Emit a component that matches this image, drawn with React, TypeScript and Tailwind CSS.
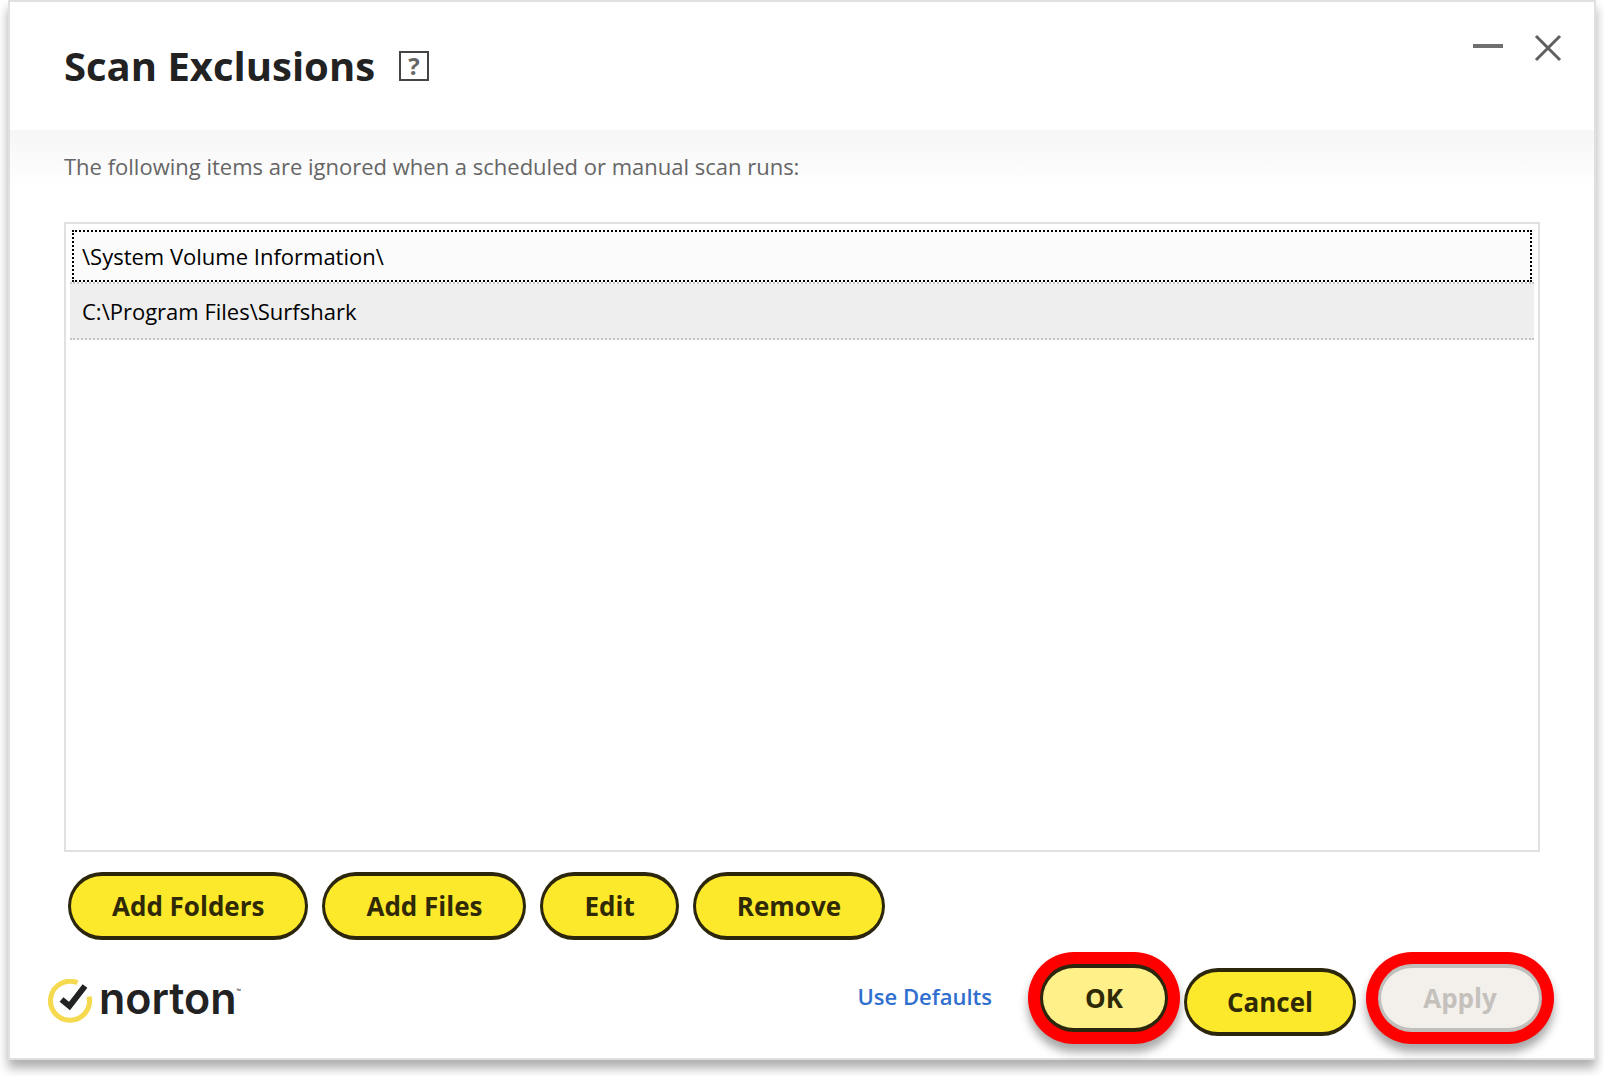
import type { ReactNode } from "react";

const exclusions = ["\\System Volume Information\\", "C:\\Program Files\\Surfshark"];

function PillButton({
  children,
  className = "bg-[#fde92b] px-[41px]",
}: {
  children: ReactNode;
  className?: string;
}) {
  return (
    <button
      type="button"
      className={`h-[68px] rounded-full border-x-3 border-y-4 border-[#2b260c] text-[26px] leading-8 font-bold whitespace-nowrap text-[#2f2a05] ${className}`}
    >
      {children}
    </button>
  );
}

function Highlight({ children }: { children: ReactNode }) {
  return (
    <div className="flex rounded-full bg-[#ff0000] p-3 shadow-[0_8px_10px_rgba(0,0,0,0.35)]">
      {children}
    </div>
  );
}

function NortonLogo() {
  return (
    <div className="flex items-end gap-[7px]">
      <svg className="size-11" viewBox="0 0 44 44" fill="none" aria-hidden="true">
        <path d="M29.5 3.8A19.5 19.5 0 1 0 41 17.5" stroke="#f5d94f" strokeWidth="5" />
        <path d="M13.5 20.5L21.5 27L37 7" stroke="#222222" strokeWidth="6" />
      </svg>
      <div className="flex items-start text-[#222222]">
        <span className="font-['Inter',sans-serif] text-[43px] leading-[50px] font-semibold">norton</span>
        <span className="text-[6px] leading-9">™</span>
      </div>
    </div>
  );
}

export default function App() {
  return (
    <div className="flex min-h-screen bg-white px-2 pb-4 font-['Open_Sans','Noto_Sans',sans-serif]">
      <main className="flex flex-1 flex-col border-2 border-[#e0e0e0] bg-white shadow-[0_8px_10px_rgba(0,0,0,0.32)]">
        <header className="flex h-32 items-start justify-between pr-[30px] pl-[54px]">
          <div className="flex h-32 items-center gap-6">
            <h1 className="text-[40px] leading-12 font-bold text-[#222222]">Scan Exclusions</h1>
            <button
              type="button"
              aria-label="Help"
              className="flex size-[30px] items-center justify-center border-2 border-[#444444] text-2xl leading-6 font-bold text-[#666666]"
            >
              ?
            </button>
          </div>
          <div className="flex items-center gap-7 pt-8">
            <button type="button" aria-label="Minimize">
              <svg className="h-8 w-8" viewBox="0 0 32 32" aria-hidden="true">
                <path d="M1 12H31" stroke="#707070" strokeWidth="4" />
              </svg>
            </button>
            <button type="button" aria-label="Close">
              <svg className="h-8 w-8" viewBox="0 0 32 32" aria-hidden="true">
                <path d="M4 2L28 26M28 2L4 26" stroke="#606060" strokeWidth="3" />
              </svg>
            </button>
          </div>
        </header>

        <section className="flex flex-1 flex-col bg-[linear-gradient(#f6f6f6,#ffffff_60px)] px-[54px] pt-5">
          <p className="text-[22px] leading-8 text-[#666666]">
            The following items are ignored when a scheduled or manual scan runs:
          </p>
          <ul className="mt-10 flex-1 border-2 border-[#e0e0e0] bg-white p-1 text-[22px] text-black">
            {exclusions.map((path, i) =>
              i === 0 ? (
                <li key={path} className="border-b-2 border-dotted border-[#c8c8c8] bg-[#fbfbfb] px-0.5 pt-0.5">
                  <div className="border-2 border-dotted border-black px-2 py-1.5 leading-9">{path}</div>
                </li>
              ) : (
                <li key={path} className="border-b-2 border-dotted border-[#c4c4c4] bg-[#eeeeee] px-3 py-[9px] leading-9">
                  {path}
                </li>
              ),
            )}
          </ul>
          <div className="mt-5 ml-1 flex gap-3.5">
            <PillButton>Add Folders</PillButton>
            <PillButton>Add Files</PillButton>
            <PillButton>Edit</PillButton>
            <PillButton>Remove</PillButton>
          </div>
        </section>

        <footer className="mt-3 flex items-center justify-between pr-10 pb-3.5 pl-[38px]">
          <NortonLogo />
          <div className="flex items-center gap-9">
            <a href="#defaults" className="pb-1 text-[22px] leading-8 font-semibold text-[#2f6fd0]">
              Use Defaults
            </a>
            <div className="flex items-end">
              <Highlight>
                <PillButton className="w-32 bg-[#fff08a]">OK</PillButton>
              </Highlight>
              <div className="pr-2.5 pb-2 pl-1">
                <PillButton className="w-[172px] bg-[#fde92b]">Cancel</PillButton>
              </div>
              <Highlight>
                <button
                  type="button"
                  disabled
                  className="h-[68px] w-[164px] rounded-full border-x-3 border-y-4 border-[#c1bfbc] bg-[#f3f0ec] text-[26px] leading-8 font-bold text-[#c4c1bd]"
                >
                  Apply
                </button>
              </Highlight>
            </div>
          </div>
        </footer>
      </main>
    </div>
  );
}
